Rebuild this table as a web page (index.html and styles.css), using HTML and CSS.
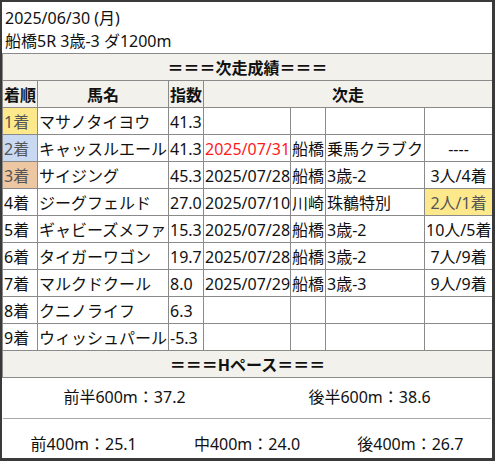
FILE: index.html
```html
<!DOCTYPE html>
<html lang="ja">
<head>
<meta charset="utf-8">
<link rel="stylesheet" href="styles.css">
</head>
<body>
<div class="card">
  <div class="head">
    <div class="hline">2025/06/30 (月)</div>
    <div class="hline">船橋5R 3歳-3 ダ1200m</div>
  </div>
  <table class="res">
    <colgroup>
      <col class="c1"><col class="c2"><col class="c3"><col class="c4"><col class="c5"><col class="c6"><col class="c7">
    </colgroup>
    <tr class="sec"><th colspan="7">＝＝＝次走成績＝＝＝</th></tr>
    <tr class="hd"><th>着順</th><th>馬名</th><th>指数</th><th colspan="4">次走</th></tr>
    <tr><td class="rk gold">1着</td><td>マサノタイヨウ</td><td>41.3</td><td></td><td></td><td></td><td></td></tr>
    <tr><td class="rk silver">2着</td><td>キャッスルエール</td><td>41.3</td><td class="red">2025/07/31</td><td>船橋</td><td>乗馬クラブク</td><td class="ctr">----</td></tr>
    <tr><td class="rk bronze">3着</td><td>サイジング</td><td>45.3</td><td>2025/07/28</td><td>船橋</td><td>3歳-2</td><td class="ctr">3人/4着</td></tr>
    <tr><td class="rk">4着</td><td>ジーグフェルド</td><td>27.0</td><td>2025/07/10</td><td>川崎</td><td>珠鶺特別</td><td class="ctr win">2人/1着</td></tr>
    <tr><td class="rk">5着</td><td>ギャビーズメファ</td><td>15.3</td><td>2025/07/28</td><td>船橋</td><td>3歳-2</td><td class="ctr">10人/5着</td></tr>
    <tr><td class="rk">6着</td><td>タイガーワゴン</td><td>19.7</td><td>2025/07/28</td><td>船橋</td><td>3歳-2</td><td class="ctr">7人/9着</td></tr>
    <tr><td class="rk">7着</td><td>マルクドクール</td><td>8.0</td><td>2025/07/29</td><td>船橋</td><td>3歳-3</td><td class="ctr">9人/9着</td></tr>
    <tr><td class="rk">8着</td><td>クニノライフ</td><td>6.3</td><td></td><td></td><td></td><td></td></tr>
    <tr><td class="rk">9着</td><td>ウィッシュパール</td><td>-5.3</td><td></td><td></td><td></td><td></td></tr>
    <tr class="sec"><th colspan="7">＝＝＝Hペース＝＝＝</th></tr>
  </table>
  <div class="pace">
    <div class="prow first"><span class="pv">前半600m：37.2</span><span class="pv">後半600m：38.6</span></div>
    <div class="sep"></div>
    <div class="prow second"><span class="pv">前400m：25.1</span><span class="pv">中400m：24.0</span><span class="pv">後400m：26.7</span></div>
  </div>
</div>
</body>
</html>
```
FILE: styles.css
```css
html, body {
  margin: 0;
  padding: 0;
  background: #ffffff;
}
.card {
  box-sizing: border-box;
  width: 495px;
  height: 461px;
  border-style: solid;
  border-color: #3a3a3a;
  border-width: 2px 3px 3px 2px;
  background: #ffffff;
  font-family: "Noto Sans", "Noto Sans CJK JP", sans-serif;
  font-size: 16px;
  color: #111;
  overflow: hidden;
}
.head {
  height: 51px;
  padding: 4px 0 0 3px;
  box-sizing: border-box;
}
.hline {
  line-height: 24px;
  height: 23px;
  white-space: nowrap;
}
.res {
  width: 490px;
  border-collapse: collapse;
  table-layout: fixed;
}
.c1 { width: 35px; }
.c2 { width: 131px; }
.c3 { width: 35px; }
.c4 { width: 87px; }
.c5 { width: 35px; }
.c6 { width: 99px; }
.c7 { width: 68px; }
.res th, .res td {
  border: 1px solid #8a8a8a;
  height: 27px;
  padding: 1px 1px 0;
  box-sizing: border-box;
  line-height: 24px;
  white-space: nowrap;
  overflow: hidden;
  text-overflow: clip;
  text-align: left;
  vertical-align: middle;
}
.res th {
  background: #f2f1ec;
  font-weight: bold;
  text-align: center;
}
.rk { color: #111; }
.gold { background: #fde98b; color: #555; }
.silver { background: #c8d9f1; color: #555; }
.bronze { background: #edc7a1; color: #555; }
.red { color: #ff1a1a; }
.res td.ctr { text-align: center; }
.res td.win { background: #fde98b; color: #555; }
.pace {
  display: flex;
  flex-direction: column;
}
.prow {
  display: flex;
  box-sizing: border-box;
  line-height: 24px;
}
.prow .pv {
  flex: 1;
  text-align: center;
  white-space: nowrap;
}
.prow.first {
  height: 40px;
  padding-top: 7px;
}
.sep {
  height: 1px;
  background: #a8a8a8;
  margin: 0 1px;
}
.prow.second {
  height: 40px;
  padding-top: 13px;
}
```
